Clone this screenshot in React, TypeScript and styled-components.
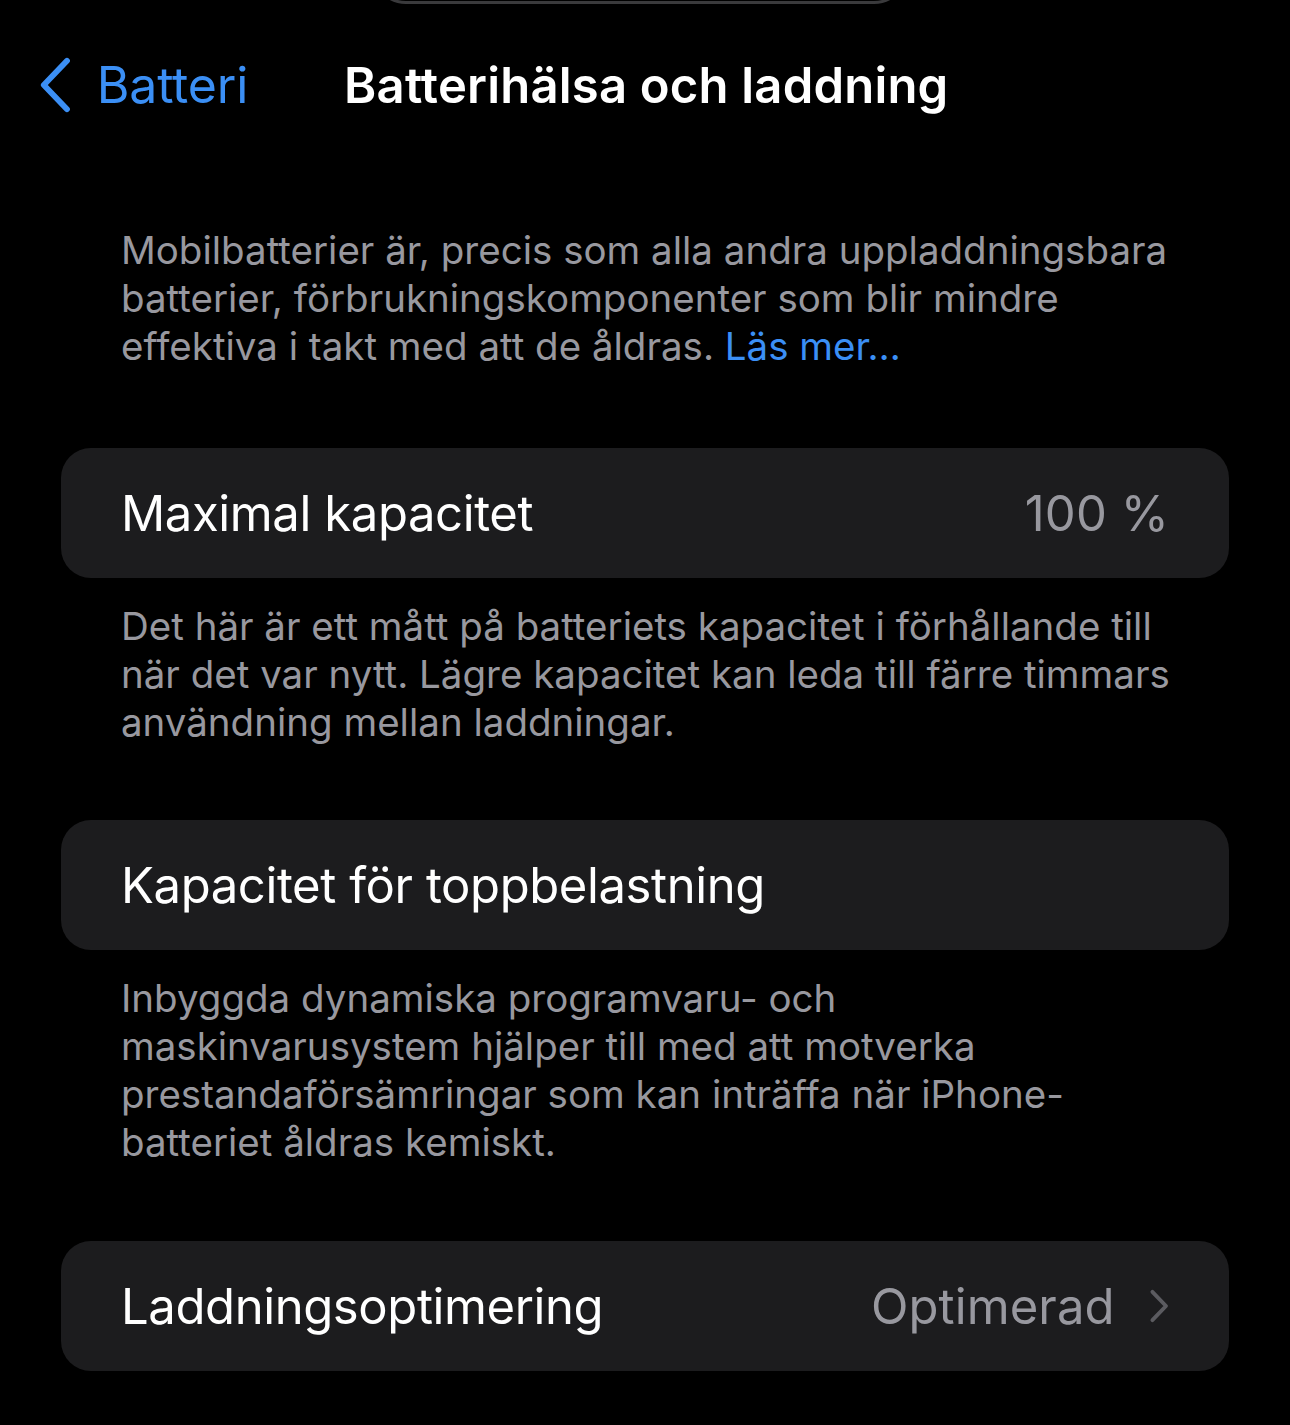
import styled, { createGlobalStyle } from "styled-components";

const GlobalStyle = createGlobalStyle`
  html, body {
    margin: 0;
    padding: 0;
    background: #000;
  }
  body {
    font-family: Inter, "Noto Sans", "Liberation Sans", sans-serif;
    -webkit-font-smoothing: antialiased;
  }
`;

const Screen = styled.div`
  position: relative;
  width: 1290px;
  min-height: 1425px;
  background: #000;
  overflow: hidden;
`;

const Island = styled.div`
  position: absolute;
  left: 372px;
  top: -70px;
  width: 536px;
  height: 74px;
  border: 3px solid #3a3a3c;
  border-radius: 34px;
  box-sizing: border-box;
`;

const NavBar = styled.header`
  display: flex;
  align-items: center;
  height: 62px;
  padding: 54px 0 0 38px;
`;

const BackButton = styled.button`
  display: flex;
  align-items: center;
  gap: 24px;
  background: none;
  border: 0;
  padding: 0;
  color: #3b8ff5;
  font: 400 50px Inter, "Noto Sans", sans-serif;
  letter-spacing: -0.2px;
  cursor: pointer;
`;

const Title = styled.h1`
  margin: 0 0 0 96px;
  color: #fff;
  font-size: 49px;
  font-weight: 600;
  letter-spacing: 0.2px;
`;

const Content = styled.main`
  padding: 110px 61px 0;
`;

const Note = styled.p<{ $gapAfter?: number }>`
  margin: 0 0 ${p => p.$gapAfter ?? 74}px;
  padding: 0 60px;
  color: #98989f;
  font-size: 38.5px;
  line-height: 48px;
  letter-spacing: 0;
  white-space: nowrap;
`;

const Link = styled.a`
  color: #3b8ff5;
  text-decoration: none;
`;

const Card = styled.div`
  display: flex;
  align-items: center;
  justify-content: space-between;
  height: 130px;
  padding: 0 60px;
  border-radius: 30px;
  background: #1c1c1e;
  margin-bottom: 24px;
`;

const Label = styled.span`
  color: #fff;
  font-size: 49px;
  letter-spacing: -0.4px;
`;

const Value = styled.span`
  display: flex;
  align-items: center;
  gap: 34px;
  color: #98989f;
  font-size: 49px;
  letter-spacing: 0.1px;
`;

const Chevron = ({ color, size, flip }: { color: string; size: number; flip?: boolean }) => (
  <svg
    width={size * 0.6}
    height={size}
    viewBox="0 0 18 30"
    style={flip ? { transform: "scaleX(-1)" } : undefined}
  >
    <path
      d="M15 2.5 L3 15 L15 27.5"
      fill="none"
      stroke={color}
      strokeWidth={flip ? 3.4 : 3}
      strokeLinecap="round"
      strokeLinejoin="round"
    />
  </svg>
);

export default function App() {
  return (
    <>
      <GlobalStyle />
      <Screen>
        <Island />
        <NavBar>
          <BackButton>
            <Chevron color="#3b8ff5" size={58} />
            Batteri
          </BackButton>
          <Title>Batterihälsa och laddning</Title>
        </NavBar>
        <Content>
          <Note $gapAfter={78}>
            Mobilbatterier är, precis som alla andra uppladdningsbara
            <br />
            batterier, förbrukningskomponenter som blir mindre
            <br />
            effektiva i takt med att de åldras. <Link href="#">Läs mer…</Link>
          </Note>

          <Card>
            <Label>Maximal kapacitet</Label>
            <Value>100 %</Value>
          </Card>
          <Note>
            Det här är ett mått på batteriets kapacitet i förhållande till
            <br />
            när det var nytt. Lägre kapacitet kan leda till färre timmars
            <br />
            användning mellan laddningar.
          </Note>

          <Card>
            <Label>Kapacitet för toppbelastning</Label>
          </Card>
          <Note $gapAfter={75}>
            Inbyggda dynamiska programvaru- och
            <br />
            maskinvarusystem hjälper till med att motverka
            <br />
            prestandaförsämringar som kan inträffa när iPhone-
            <br />
            batteriet åldras kemiskt.
          </Note>

          <Card>
            <Label>Laddningsoptimering</Label>
            <Value>
              Optimerad
              <Chevron color="#5b5b60" size={34} flip />
            </Value>
          </Card>
        </Content>
      </Screen>
    </>
  );
}
